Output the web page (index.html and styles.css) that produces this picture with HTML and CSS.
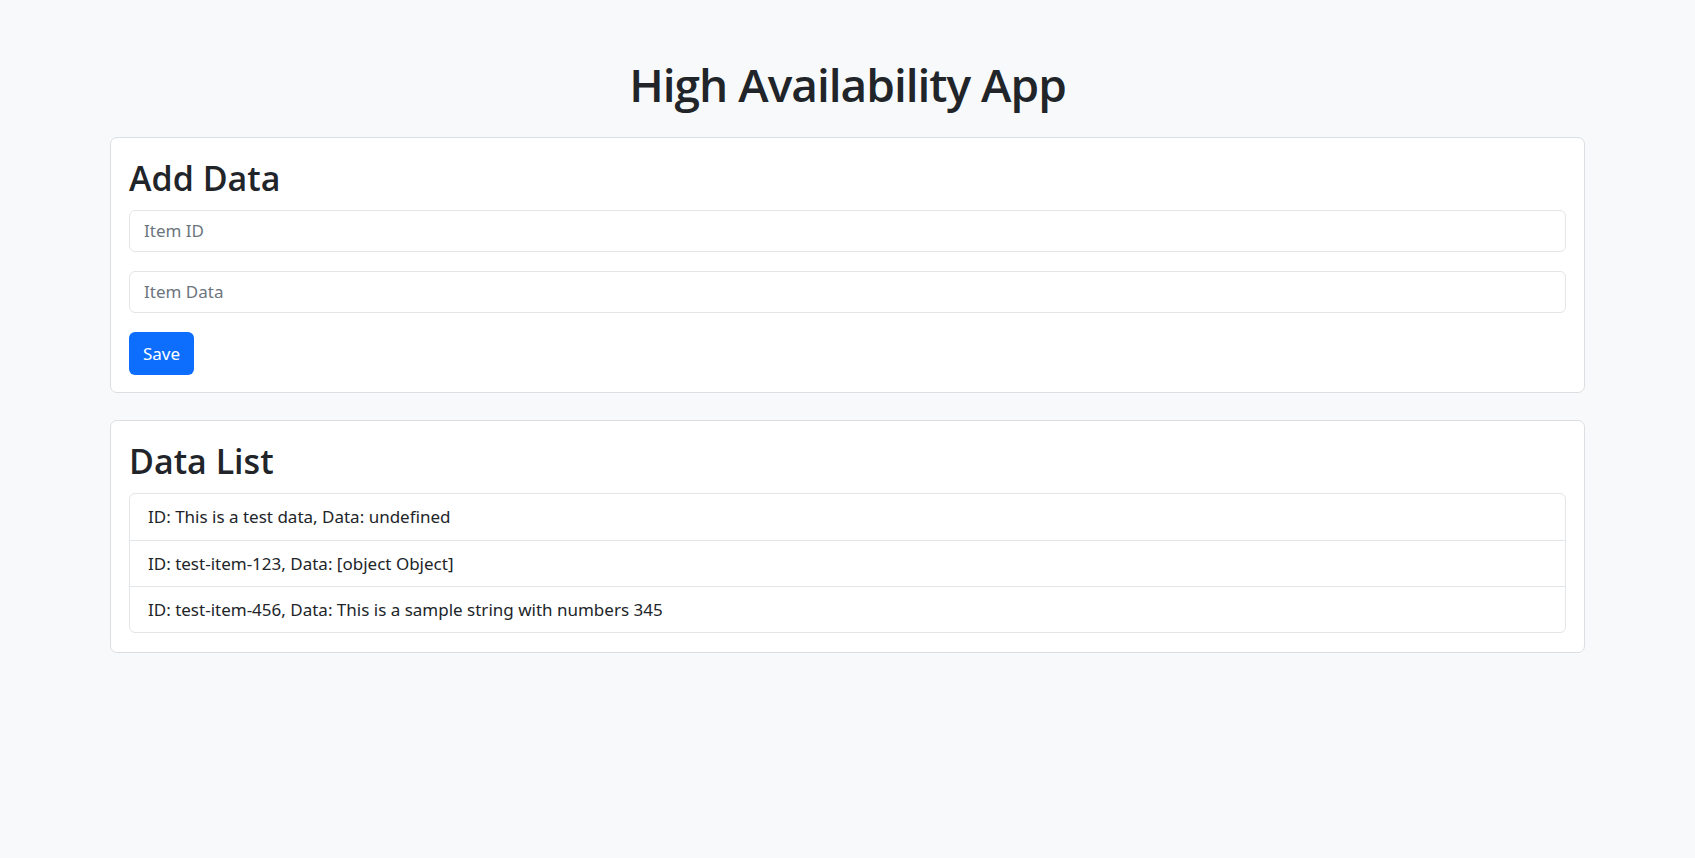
FILE: index.html
```html
<!DOCTYPE html>
<html lang="en">
<head>
<meta charset="utf-8">
<title>High Availability App</title>
<link rel="stylesheet" href="styles.css">
</head>
<body>
<div class="container">
  <h1 class="title">High Availability App</h1>

  <div class="card">
    <h2 class="card-title">Add Data</h2>
    <input class="field" type="text" placeholder="Item ID">
    <input class="field" type="text" placeholder="Item Data">
    <button class="btn-primary" type="button">Save</button>
  </div>

  <div class="card">
    <h2 class="card-title">Data List</h2>
    <ul class="list">
      <li class="list-item">ID: This is a test data, Data: undefined</li>
      <li class="list-item">ID: test-item-123, Data: [object Object]</li>
      <li class="list-item">ID: test-item-456, Data: This is a sample string with numbers 345</li>
    </ul>
  </div>
</div>
</body>
</html>
```
FILE: styles.css
```css
* { box-sizing: border-box; }

html, body {
  margin: 0;
  padding: 0;
}

body {
  background: #f8f9fa;
  color: #212529;
  font-family: "Noto Sans", "Open Sans", sans-serif;
  font-size: 17px;
  line-height: 1.5;
}

.container {
  width: 1475px;
  margin: 0 auto;
  padding-top: 57px;
}

.title {
  margin: 0 0 25px;
  text-align: center;
  font-family: "Open Sans", "Noto Sans", sans-serif;
  font-size: 46px;
  font-weight: 600;
  letter-spacing: -1px;
  line-height: 1.2;
}

.card {
  display: flex;
  flex-direction: column;
  align-items: flex-start;
  background: #fff;
  border: 1px solid #dcdfe2;
  border-radius: 7px;
  padding: 20px 18px 17px;
  margin-bottom: 27px;
}

.card-title {
  margin: 0 0 11px;
  font-family: "Open Sans", "Noto Sans", sans-serif;
  font-size: 34px;
  font-weight: 600;
  line-height: 1.2;
}

.field {
  display: block;
  width: 100%;
  height: 42px;
  margin: 0 0 19px;
  padding: 0 14px;
  border: 1px solid #e3e6e9;
  border-radius: 6px;
  background: #fff;
  font-family: inherit;
  font-size: 17px;
  color: #212529;
}

.field::placeholder { color: #6c757d; }

.btn-primary {
  height: 43px;
  padding: 0 14px;
  border: none;
  border-radius: 6px;
  background: #0d6efd;
  color: #fff;
  font-family: inherit;
  font-size: 17px;
  line-height: 1;
}

.list {
  width: 100%;
  margin: 0 0 2px;
  padding: 0;
  list-style: none;
  border: 1px solid #e3e6e9;
  border-radius: 6px;
}

.list-item {
  height: 46px;
  display: flex;
  align-items: center;
  padding: 0 18px;
  border-top: 1px solid #e3e6e9;
}

.list-item:first-child { border-top: none; }
```
